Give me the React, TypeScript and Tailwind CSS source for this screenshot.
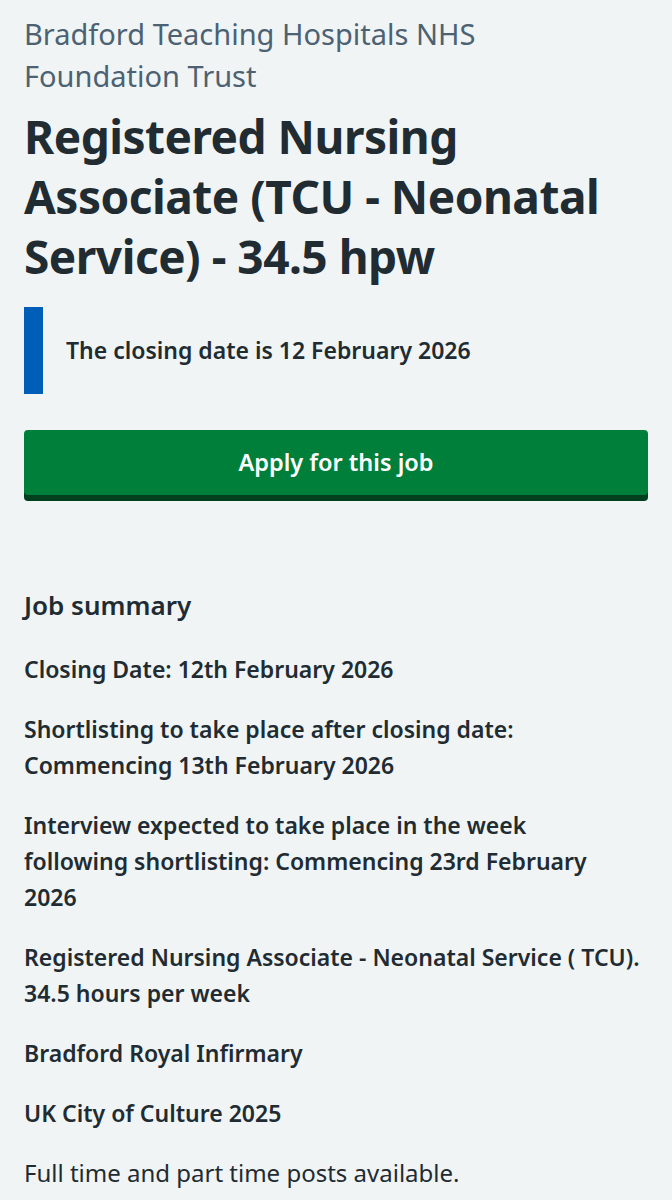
const paragraphs: { text: string; bold: boolean }[] = [
  { text: 'Closing Date: 12th February 2026', bold: true },
  { text: 'Shortlisting to take place after closing date:\nCommencing 13th February 2026', bold: true },
  {
    text: 'Interview expected to take place in the week\nfollowing shortlisting: Commencing 23rd February\n2026',
    bold: true,
  },
  { text: 'Registered Nursing Associate - Neonatal Service ( TCU).\n34.5 hours per week', bold: true },
  { text: 'Bradford Royal Infirmary', bold: true },
  { text: 'UK City of Culture 2025', bold: true },
  { text: 'Full time and part time posts available.', bold: false },
];

function App() {
  return (
    <div className="min-h-[1200px] bg-[#f0f4f5] px-6 pt-[13px] text-[#212b32] font-['Noto_Sans',sans-serif]">
      {/* employer */}
      <p className="whitespace-pre-line text-[29px] leading-[42px] text-[#4c6272]">
        {'Bradford Teaching Hospitals NHS\nFoundation Trust'}
      </p>

      {/* job title */}
      <h1 className="mt-[9px] text-[46px] font-bold leading-[60px] tracking-[-0.5px]">
        Registered Nursing Associate (TCU - Neonatal Service) - 34.5 hpw
      </h1>

      {/* closing date callout */}
      <div className="mt-[21px] flex h-[87px] items-center border-l-[19px] border-[#005eb8] pl-[23px]">
        <p className="text-[23px] font-semibold">The closing date is 12 February 2026</p>
      </div>

      {/* apply button */}
      <button className="mt-[36px] h-[65px] w-full rounded-[4px] bg-[#007f3b] text-[23.5px] font-semibold text-white shadow-[0_6px_0_#00401e]">
        Apply for this job
      </button>

      {/* summary */}
      <h2 className="mt-[92px] text-[26px] font-semibold leading-[36px]">Job summary</h2>
      <div className="mt-[28px] flex flex-col gap-[24px] pb-10">
        {paragraphs.map((p) => (
          <p
            key={p.text}
            className={
              p.bold
                ? 'whitespace-pre-line text-[23px] font-semibold leading-[36px]'
                : 'whitespace-pre-line text-[24px] leading-[36px]'
            }
          >
            {p.text}
          </p>
        ))}
      </div>
    </div>
  );
}

export default App;
